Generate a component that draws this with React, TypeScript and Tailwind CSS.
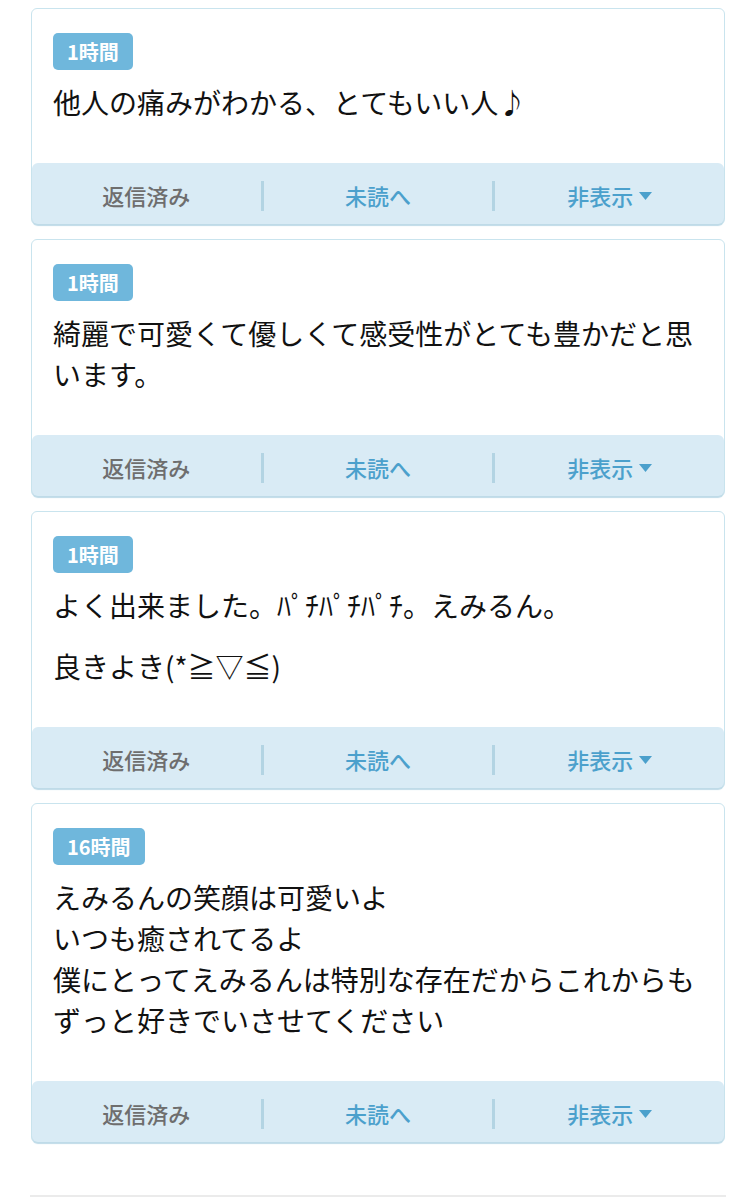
const font = { fontFamily: '"Noto Sans CJK JP", "Noto Sans", sans-serif' };

type Msg = { time: string; paragraphs: string[] };

const messages: Msg[] = [
  { time: "1時間", paragraphs: ["他人の痛みがわかる、とてもいい人♪"] },
  { time: "1時間", paragraphs: ["綺麗で可愛くて優しくて感受性がとても豊かだと思います。"] },
  { time: "1時間", paragraphs: ["よく出来ました。ﾊﾟﾁﾊﾟﾁﾊﾟﾁ。えみるん。", "良きよき(*≧▽≦)"] },
  {
    time: "16時間",
    paragraphs: [
      "えみるんの笑顔は可愛いよ\nいつも癒されてるよ\n僕にとってえみるんは特別な存在だからこれからもずっと好きでいさせてください",
    ],
  },
];

const Card = ({ msg }: { msg: Msg }) => (
  <div className="bg-white border border-[#c9e4ee] rounded-[6px]">
    <div className="px-[21px] pt-6 pb-10">
      <div className="flex">
        <span className="flex items-center h-[37px] px-[14px] rounded-[5px] bg-[#6fb7dc] text-white text-[20px] leading-none font-bold">
          {msg.time}
        </span>
      </div>
      <div className="mt-3 flex flex-col gap-[20px]">
        {msg.paragraphs.map((p, i) => (
          <p key={i} className="text-[28px] leading-[41px] text-[#111] whitespace-pre-line">
            {p}
          </p>
        ))}
      </div>
    </div>
    <div className="h-[61px] rounded-[6px] bg-[#d9ebf5] shadow-[0_2px_1px_#bfdbe8] flex items-center text-[22px] leading-none font-medium">
      <div className="flex-1 text-center text-[#6e6e6e] pt-[3px]">返信済み</div>
      <div className="w-[3px] h-[30px] bg-[#b3d4e3] mt-[4px]" />
      <div className="flex-1 text-center text-[#4ba0cc] pt-[3px]">未読へ</div>
      <div className="w-[3px] h-[30px] bg-[#b3d4e3] mt-[4px]" />
      <div className="flex-1 text-[#4ba0cc] pt-[3px] flex items-center justify-center gap-[6px]">
        <span>非表示</span>
        <svg width="13" height="8" viewBox="0 0 13 8" className="mt-[1px]">
          <path d="M0 0 H13 L6.5 8 Z" fill="#4ba0cc" />
        </svg>
      </div>
    </div>
  </div>
);

export default function App() {
  return (
    <div className="w-[756px] h-[1200px] bg-white overflow-hidden" style={font}>
      <div className="pt-2 px-[31px] flex flex-col gap-[14px]">
        {messages.map((m, i) => (
          <Card key={i} msg={m} />
        ))}
      </div>
      <div className="mt-[52px] mx-[30px] h-[2px] bg-[#ebebeb]" />
    </div>
  );
}
